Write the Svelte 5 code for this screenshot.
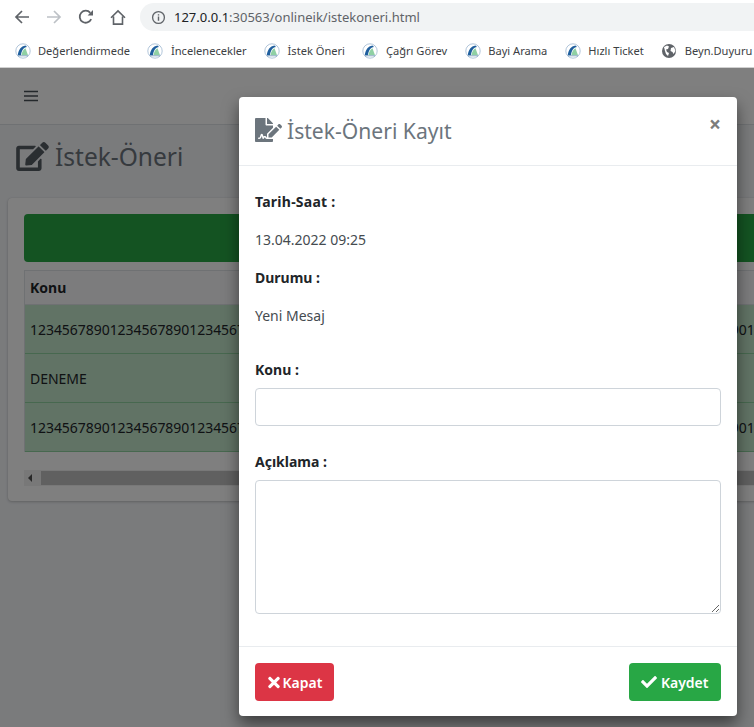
<script>
  const bookmarks = [
    { label: 'Değerlendirmede' },
    { label: 'İncelenecekler' },
    { label: 'İstek Öneri' },
    { label: 'Çağrı Görev' },
    { label: 'Bayi Arama' },
    { label: 'Hızlı Ticket' },
    { label: 'Beyn.Duyuru', globe: true }
  ];

  const longText = '1234567890'.repeat(10);
  const rows = [longText, 'DENEME', longText];
</script>

<div class="browser">
  <header class="chrome">
    <div class="toolbar">
      <button class="nav-btn" aria-label="Geri">
        <svg viewBox="0 0 16 16" width="16" height="16"><path d="M15 8H2M8 2L2 8l6 6" fill="none" stroke="#5f6368" stroke-width="1.7" /></svg>
      </button>
      <button class="nav-btn" aria-label="İleri">
        <svg viewBox="0 0 16 16" width="16" height="16"><path d="M1 8h13M8 2l6 6-6 6" fill="none" stroke="#bdc1c6" stroke-width="1.7" /></svg>
      </button>
      <button class="nav-btn" aria-label="Yenile">
        <svg viewBox="0 0 16 16" width="16" height="16"><path d="M13.2 10.2A6 6 0 1 1 12.3 3.8" fill="none" stroke="#5f6368" stroke-width="1.8" /><path d="M9.6 6.4H15V1z" fill="#5f6368" /></svg>
      </button>
      <button class="nav-btn" aria-label="Ana sayfa">
        <svg viewBox="0 0 16 16" width="17" height="17"><path d="M1 8.2L8 1.4l7 6.8M3.5 7v7.6h9V7" fill="none" stroke="#5f6368" stroke-width="1.6" /></svg>
      </button>
      <div class="address">
        <svg viewBox="0 0 16 16" width="15" height="15"><circle cx="8" cy="8" r="6.3" fill="none" stroke="#5f6368" stroke-width="1.4" /><path d="M8 7v4.4M8 4.4v1.5" stroke="#5f6368" stroke-width="1.5" /></svg>
        <span class="url"><b>127.0.0.1</b>:30563/onlineik/istekoneri.html</span>
      </div>
    </div>
    <nav class="bookmarks">
      {#each bookmarks as item}
        <span class="bookmark">
          {#if item.globe}
            <svg viewBox="0 0 16 16" width="16" height="16"><circle cx="8" cy="8" r="7" fill="#5f6368" /><path d="M3 4l3-1.5 2 1-1 2.5-2 .5 1 2.500 2 1-1 3-2-2-1-3zM10 5l3-1 1.500 4-2 3-1-2-2-1z" fill="#fff" /></svg>
          {:else}
            <svg viewBox="0 0 16 16" width="16" height="16">
              <circle cx="8" cy="8" r="7.200" fill="#fff" stroke="#a9bfd6" stroke-width="0.900" />
              <path d="M2.800 12.200C3.500 7 6 3.300 10.500 2.600L12 4C8.500 4.500 6.500 7.500 6 12.200z" fill="#1f5f9e" />
              <path d="M6.500 12.200C7 8.500 8.500 6 10.500 5.200L13 12.200z" fill="#8fd0a4" />
              <path d="M3 12.800h10" stroke="#6f93b8" stroke-width="0.800" />
            </svg>
          {/if}
          <span>{item.label}</span>
        </span>
      {/each}
    </nav>
  </header>

  <div class="page">
    <div class="topbar">
      <svg viewBox="0 0 14 12" width="14" height="12"><path d="M0 1.500h14M0 6h14M0 10.500h14" stroke="#495057" stroke-width="1.700" /></svg>
    </div>
    <h1 class="page-title">
      <svg viewBox="0 0 576 512" width="33" height="29"><path d="M402.600 83.200l90.200 90.200c3.800 3.800 3.800 10 0 13.800L274.400 405.600l-92.800 10.300c-12.400 1.400-22.900-9.100-21.500-21.500l10.300-92.800L388.800 83.200c3.800-3.800 10-3.800 13.800 0zm162-22.900l-48.800-48.800c-15.200-15.200-39.900-15.200-55.200 0l-35.400 35.400c-3.800 3.800-3.800 10 0 13.800l90.200 90.200c3.800 3.800 10 3.800 13.800 0l35.400-35.400c15.200-15.300 15.200-40 0-55.200zM384 346.200V448H64V128h229.800c3.200 0 6.200-1.300 8.500-3.500l40-40c7.600-7.600 2.200-20.500-8.500-20.500H48C21.500 64 0 85.500 0 112v352c0 26.500 21.500 48 48 48h352c26.500 0 48-21.500 48-48V306.200c0-10.700-12.900-16-20.500-8.500l-40 40c-2.200 2.300-3.500 5.300-3.500 8.500z" fill="currentColor" /></svg>
      <span>İstek-Öneri</span>
    </h1>
    <section class="card">
      <div class="banner"></div>
      <div class="table">
        <div class="head">Konu</div>
        {#each rows as row}
          <div class="row">{row}</div>
        {/each}
      </div>
      <div class="scrollbar">
        <span class="arrow"></span>
        <span class="thumb"></span>
      </div>
    </section>
    <div class="backdrop"></div>
  </div>

  <div class="modal">
    <div class="modal-header">
      <h4>
        <svg viewBox="0 0 576 512" width="27" height="24"><path d="M218.170 424.140c-2.950-5.920-8.090-6.520-10.170-6.520s-7.220.59-10.020 6.190l-7.670 15.340c-6.370 12.780-25.030 11.370-29.480-2.090L144 386.590l-10.610 31.880c-5.890 17.660-22.380 29.530-41 29.530H80c-8.840 0-16-7.160-16-16s7.160-16 16-16h12.390c4.830 0 9.110-3.080 10.640-7.660l18.190-54.640c3.300-9.810 12.440-16.410 22.780-16.410s19.480 6.590 22.770 16.410l13.880 41.640c19.750-16.190 54.060-9.700 66 14.160 1.890 3.780 5.490 5.950 9.360 6.260v-82.120l128-127.090V160H248c-13.200 0-24-10.800-24-24V0H24C10.700 0 0 10.700 0 24v464c0 13.300 10.700 24 24 24h336c13.300 0 24-10.700 24-24v-40l-128-.11c-16.120-.31-30.580-9.280-37.830-23.750zM384 121.900c0-6.300-2.500-12.400-7-16.900L279.100 7c-4.500-4.500-10.600-7-17-7H256v128h128v-6.100zm-96 225.060V416h68.990l161.680-162.780-67.880-67.880L288 346.960zm280.540-179.630l-31.870-31.870c-9.940-9.940-26.070-9.940-36.010 0l-27.250 27.250 67.880 67.880 27.250-27.250c9.950-9.940 9.950-26.070 0-36.010z" fill="currentColor" /></svg>
        <span>İstek-Öneri Kayıt</span>
      </h4>
      <button class="close" aria-label="Kapat">×</button>
    </div>
    <div class="modal-body">
      <p class="label first">Tarih-Saat :</p>
      <p class="value">13.04.2022 09:25</p>
      <p class="label second">Durumu :</p>
      <p class="value">Yeni Mesaj</p>
      <label class="field konu">
        <span>Konu :</span>
        <input type="text" />
      </label>
      <label class="field aciklama">
        <span>Açıklama :</span>
        <textarea></textarea>
      </label>
    </div>
    <div class="modal-footer">
      <button class="btn danger">
        <svg viewBox="0 0 352 512" width="12" height="17"><path d="M242.720 256l100.070-100.070c12.280-12.280 12.280-32.190 0-44.480l-22.240-22.240c-12.280-12.280-32.190-12.280-44.480 0L176 189.280 75.930 89.210c-12.280-12.280-32.190-12.280-44.480 0L9.210 111.450c-12.280 12.280-12.280 32.190 0 44.480L109.280 256 9.210 356.070c-12.280 12.280-12.280 32.190 0 44.480l22.240 22.240c12.280 12.280 32.200 12.280 44.480 0L176 322.720l100.070 100.070c12.280 12.280 32.200 12.280 44.480 0l22.240-22.240c12.280-12.280 12.280-32.190 0-44.480L242.720 256z" fill="currentColor" /></svg>
        Kapat
      </button>
      <button class="btn success">
        <svg viewBox="0 0 512 512" width="16" height="16"><path d="M173.898 439.404l-166.400-166.400c-9.997-9.997-9.997-26.206 0-36.204l36.203-36.204c9.997-9.998 26.207-9.998 36.204 0L192 312.690 432.095 72.596c9.997-9.997 26.207-9.997 36.204 0l36.203 36.204c9.997 9.997 9.997 26.206 0 36.204l-294.400 294.401c-9.998 9.997-26.207 9.997-36.204-.001z" fill="currentColor" /></svg>
        Kaydet
      </button>
    </div>
  </div>
</div>

<style>
  :global(body) {
    margin: 0;
    background: #f4f6f9;
    font-family: 'Noto Sans', 'Open Sans', sans-serif;
    font-size: 14px;
    color: #212529;
  }

  .browser {
    position: relative;
    width: 754px;
    height: 727px;
    overflow: hidden;
  }

  .chrome {
    height: 67px;
    background: #fff;
    border-bottom: 1px solid #d0d0d0;
  }

  .toolbar {
    display: flex;
    align-items: center;
    height: 34px;
    padding-left: 14px;
    box-sizing: border-box;
  }

  .nav-btn {
    display: flex;
    width: 16px;
    height: 17px;
    padding: 0;
    margin-right: 16px;
    border: 0;
    background: none;
  }

  .address {
    display: flex;
    align-items: center;
    gap: 8px;
    flex: none;
    width: 630px;
    height: 28px;
    margin-left: -2px;
    padding-left: 11px;
    border-radius: 14px;
    background: #f1f3f4;
  }

  .url {
    color: #5f6368;
    font-size: 13px;
    white-space: nowrap;
  }

  .url b {
    color: #202124;
    font-weight: 400;
  }

  .bookmarks {
    display: flex;
    height: 33px;
    align-items: center;
    padding-left: 14.500px;
    white-space: nowrap;
    overflow: hidden;
  }

  .bookmark {
    display: flex;
    align-items: center;
    gap: 7.500px;
    margin-right: 17.500px;
    color: #3c4043;
    font-size: 11.100px;
  }

  .page {
    position: relative;
    height: 659px;
    overflow: hidden;
  }

  .topbar {
    display: flex;
    align-items: center;
    height: 56px;
    padding-left: 24px;
    background: #fff;
    border-bottom: 1px solid #dee2e6;
  }

  .page-title {
    display: flex;
    align-items: center;
    gap: 6px;
    height: 63px;
    margin: 0 0 10px;
    padding-left: 16px;
    font-size: 24.500px;
    font-weight: 400;
    color: #6c757d;
  }

  .page-title svg {
    color: #555c63;
  }

  .card {
    width: 780px;
    height: 303px;
    margin-left: 8px;
    padding: 16px;
    box-sizing: border-box;
    border-radius: 4px;
    background: #fff;
    box-shadow: 0 0 1px rgba(0, 0, 0, .125), 0 1px 3px rgba(0, 0, 0, .2);
  }

  .banner {
    height: 48px;
    border-radius: 4px;
    background: #28a745;
  }

  .table {
    margin-top: 8px;
    border: 1px solid #dee2e6;
    border-bottom: 0;
  }

  .head {
    height: 33px;
    line-height: 33px;
    padding-left: 5px;
    font-weight: 700;
    background: #f8f9fa;
    border-bottom: 1px solid #dee2e6;
  }

  .row {
    height: 48px;
    line-height: 50px;
    padding-left: 5px;
    overflow: hidden;
    white-space: nowrap;
    letter-spacing: -.045px;
    background: #c3e6cb;
    border-bottom: 1px solid #8fd19e;
  }

  .scrollbar {
    display: flex;
    align-items: center;
    height: 16px;
    margin-top: 18px;
    background: #f1f1f1;
  }

  .arrow {
    width: 0;
    height: 0;
    margin: 0 6px 0 4px;
    border: 4px solid transparent;
    border-left: 0;
    border-right: 4px solid #505050;
  }

  .thumb {
    flex: 1;
    height: 14px;
    margin-left: 3px;
    background: #c1c1c1;
  }

  .backdrop {
    position: absolute;
    inset: 0;
    background: rgba(0, 0, 0, .5);
  }

  .modal {
    position: absolute;
    top: 97px;
    left: 239px;
    display: flex;
    flex-direction: column;
    width: 498px;
    height: 619px;
    border-radius: 4px;
    background: #fff;
    box-shadow: 0 8px 16px rgba(0, 0, 0, .5);
  }

  .modal-header {
    display: flex;
    justify-content: space-between;
    height: 69px;
    box-sizing: border-box;
    padding: 16px;
    border-bottom: 1px solid #e9ecef;
  }

  .modal-header h4 {
    display: flex;
    align-items: center;
    gap: 5px;
    height: 34px;
    margin: 0;
    font-size: 21.100px;
    font-weight: 400;
    color: #6c757d;
  }

  .close {
    height: 24px;
    margin-top: -1px;
    padding: 0;
    border: 0;
    background: none;
    font-family: inherit;
    font-size: 21px;
    font-weight: 700;
    line-height: 24px;
    color: #7c7c7c;
  }

  .modal-body {
    flex: 1;
    padding: 0 16px;
  }

  .modal-body p {
    margin: 0;
    line-height: 20px;
  }

  .label {
    font-weight: 700;
  }

  .first {
    padding-top: 26px;
    letter-spacing: .25px;
  }

  .modal-body .value {
    padding-top: 18px;
    color: #454b50;
  }

  .second {
    padding-top: 18px;
  }

  .field {
    display: block;
  }

  .field span {
    display: block;
    font-weight: 700;
    line-height: 20px;
  }

  .konu {
    margin-top: 34px;
  }

  .aciklama {
    margin-top: 26px;
  }

  input,
  textarea {
    display: block;
    width: 100%;
    box-sizing: border-box;
    border: 1px solid #ced4da;
    border-radius: 4px;
    background: #fff;
  }

  input {
    height: 38px;
    margin-top: 8px;
  }

  textarea {
    height: 134px;
    margin-top: 8px;
  }

  .modal-footer {
    display: flex;
    justify-content: space-between;
    height: 70px;
    box-sizing: border-box;
    padding: 16px;
    border-top: 1px solid #e9ecef;
  }

  .btn {
    display: flex;
    align-items: center;
    gap: 3.500px;
    height: 38px;
    padding: 0 12.500px;
    border: 0;
    border-radius: 4px;
    color: #fff;
    font-family: inherit;
    font-size: 14px;
    font-weight: 600;
  }

  .danger {
    gap: 3px;
    padding-right: 12px;
    background: #dc3545;
  }

  .success {
    background: #28a745;
  }
</style>
